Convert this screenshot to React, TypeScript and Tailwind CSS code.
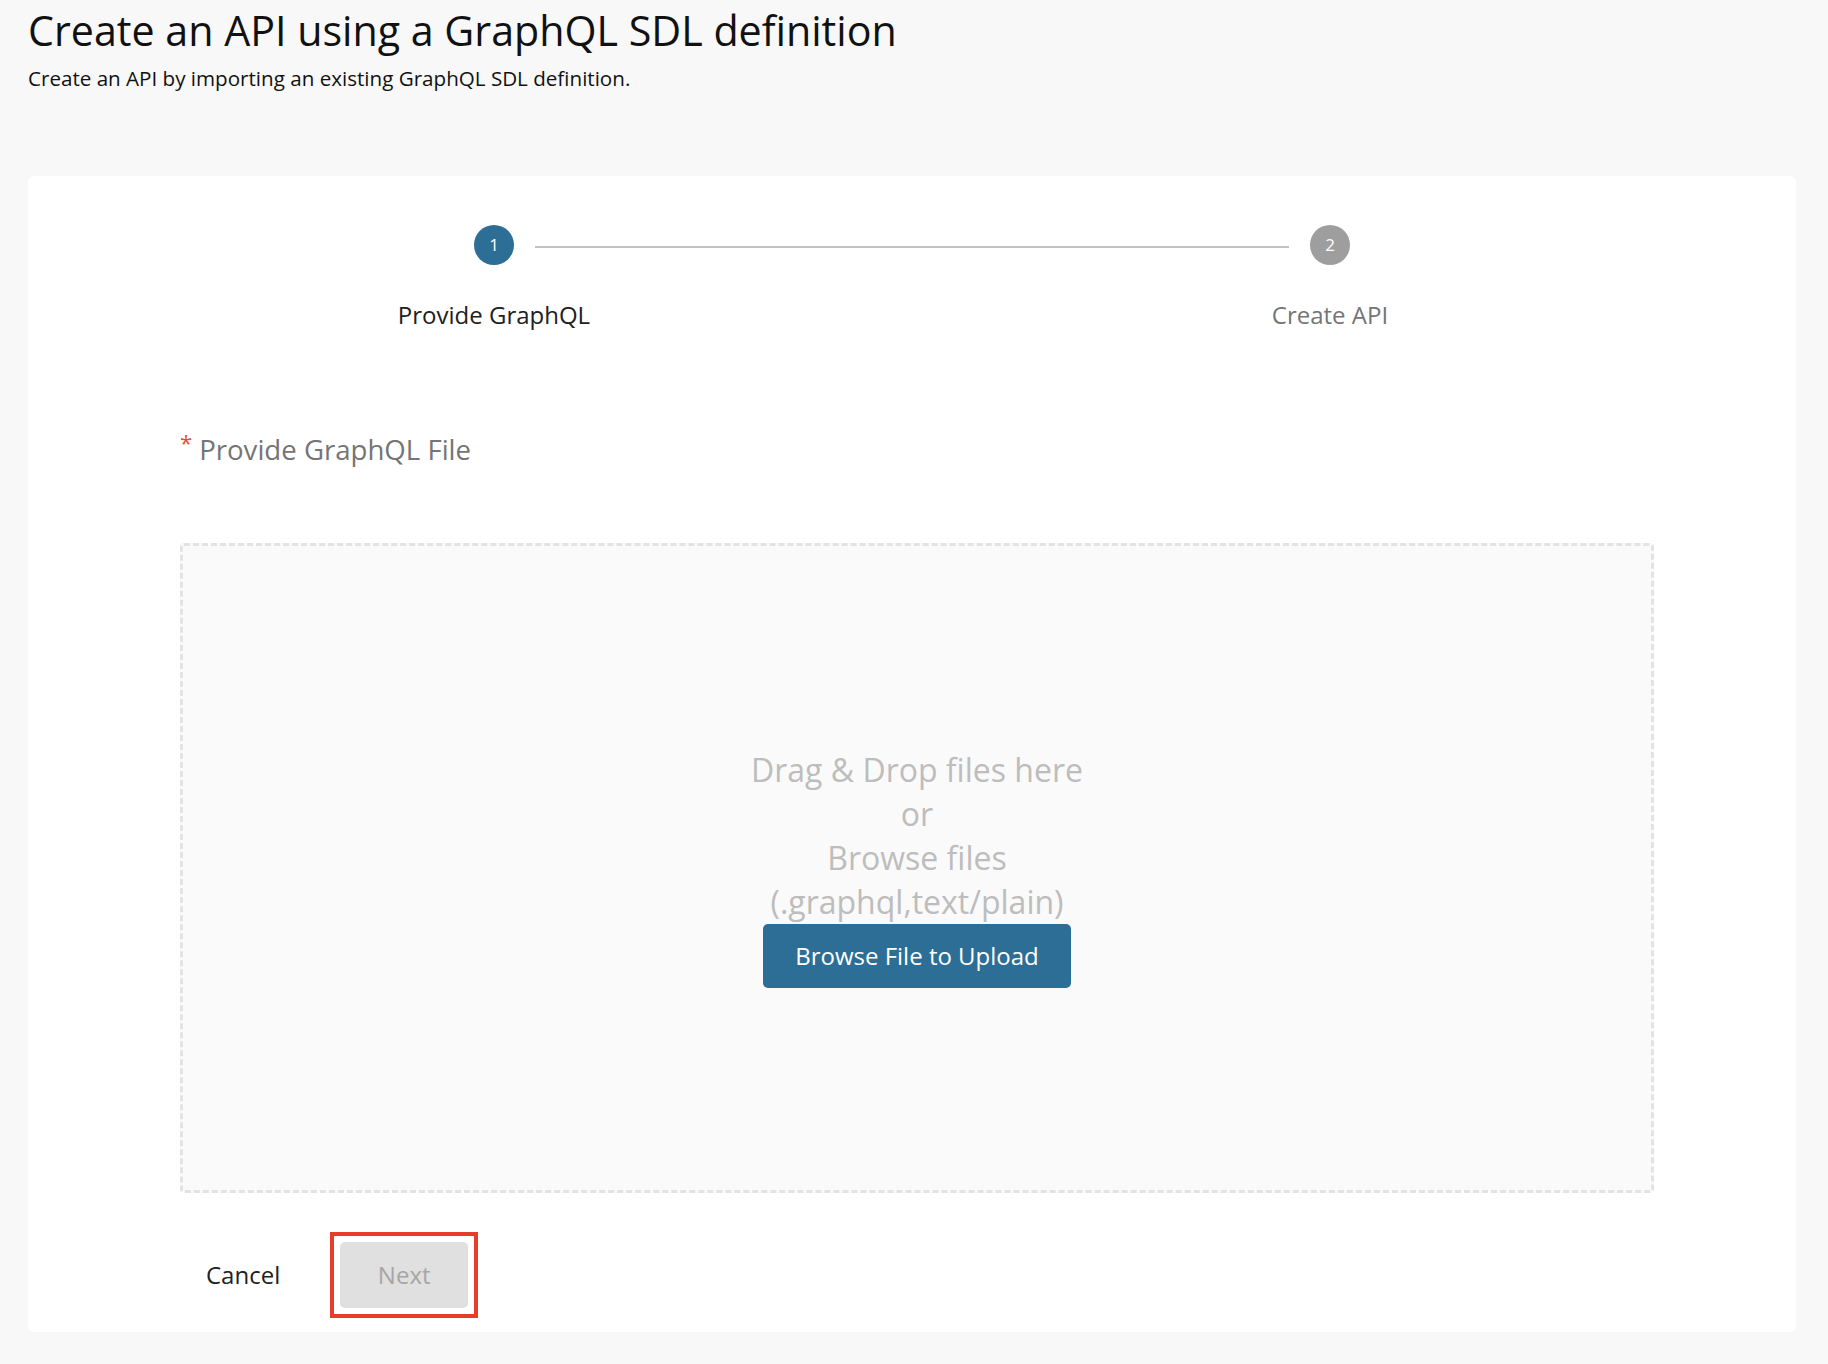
import React from "react";

export default function App() {
  return (
    <div className="min-h-[1364px] bg-[#f8f8f8] pl-[28px] pr-[32px] pt-[5px] font-['Open_Sans',sans-serif]">
      <h1 className="text-[41.2px] leading-[50px] text-[#111] font-normal">
        Create an API using a GraphQL SDL definition
      </h1>
      <p className="mt-[9px] text-[20.6px] leading-[28px] text-[#111]">
        Create an API by importing an existing GraphQL SDL definition.
      </p>

      <div className="mt-[84px] rounded-[6px] bg-white pt-[49px] pb-[14px]">
        {/* Stepper */}
        <div className="grid grid-cols-2 px-[48px]">
          <div className="flex flex-col items-center">
            <div className="flex h-[40px] w-[40px] items-center justify-center rounded-full bg-[#2c6e96] text-[17px] text-white">
              1
            </div>
            <div className="mt-[33px] text-[24px] leading-[34px] text-[#212121]">Provide GraphQL</div>
          </div>
          <div className="relative flex flex-col items-center">
            <div className="absolute top-[21px] left-[calc(-50%+41px)] right-[calc(50%+41px)] h-[2px] bg-[#c2c2c2]" />
            <div className="flex h-[40px] w-[40px] items-center justify-center rounded-full bg-[#9e9e9e] text-[17px] text-white">
              2
            </div>
            <div className="mt-[33px] text-[24px] leading-[34px] text-[#757575]">Create API</div>
          </div>
        </div>

        {/* Form */}
        <div className="ml-[152px] mr-[142px]">
          <div className="mt-[97px] flex items-start">
            <span className="mt-[2px] mr-[7px] text-[22px] leading-[22px] text-[#e74c3c]">*</span>
            <span className="text-[27.6px] leading-[40px] text-[#757575]">Provide GraphQL File</span>
          </div>

          <div className="mt-[74px] flex h-[650px] flex-col items-center justify-center rounded-[4px] border-[3px] border-dashed border-[#e3e3e3] bg-[#fafafa]">
            <div className="text-center text-[32px] leading-[44px] text-[#bdbdbd]">
              <div>Drag &amp; Drop files here</div>
              <div>or</div>
              <div>Browse files</div>
              <div>(.graphql,text/plain)</div>
            </div>
            <button className="flex h-[64px] items-center rounded-[5px] bg-[#2c6e96] px-[32px] text-[24px] text-white">
              Browse File to Upload
            </button>
          </div>

          <div className="mt-[39px] flex items-center">
            <button className="px-[26px] text-[24px] leading-[34px] text-[#212121]">Cancel</button>
            <div className="ml-[24px] border-[4px] border-[#e53d2a] p-[6px]">
              <button className="flex h-[66px] w-[128px] items-center justify-center rounded-[5px] bg-[#e0e0e0] text-[24px] text-[#a6a6a6]">
                Next
              </button>
            </div>
          </div>
        </div>
      </div>
    </div>
  );
}
